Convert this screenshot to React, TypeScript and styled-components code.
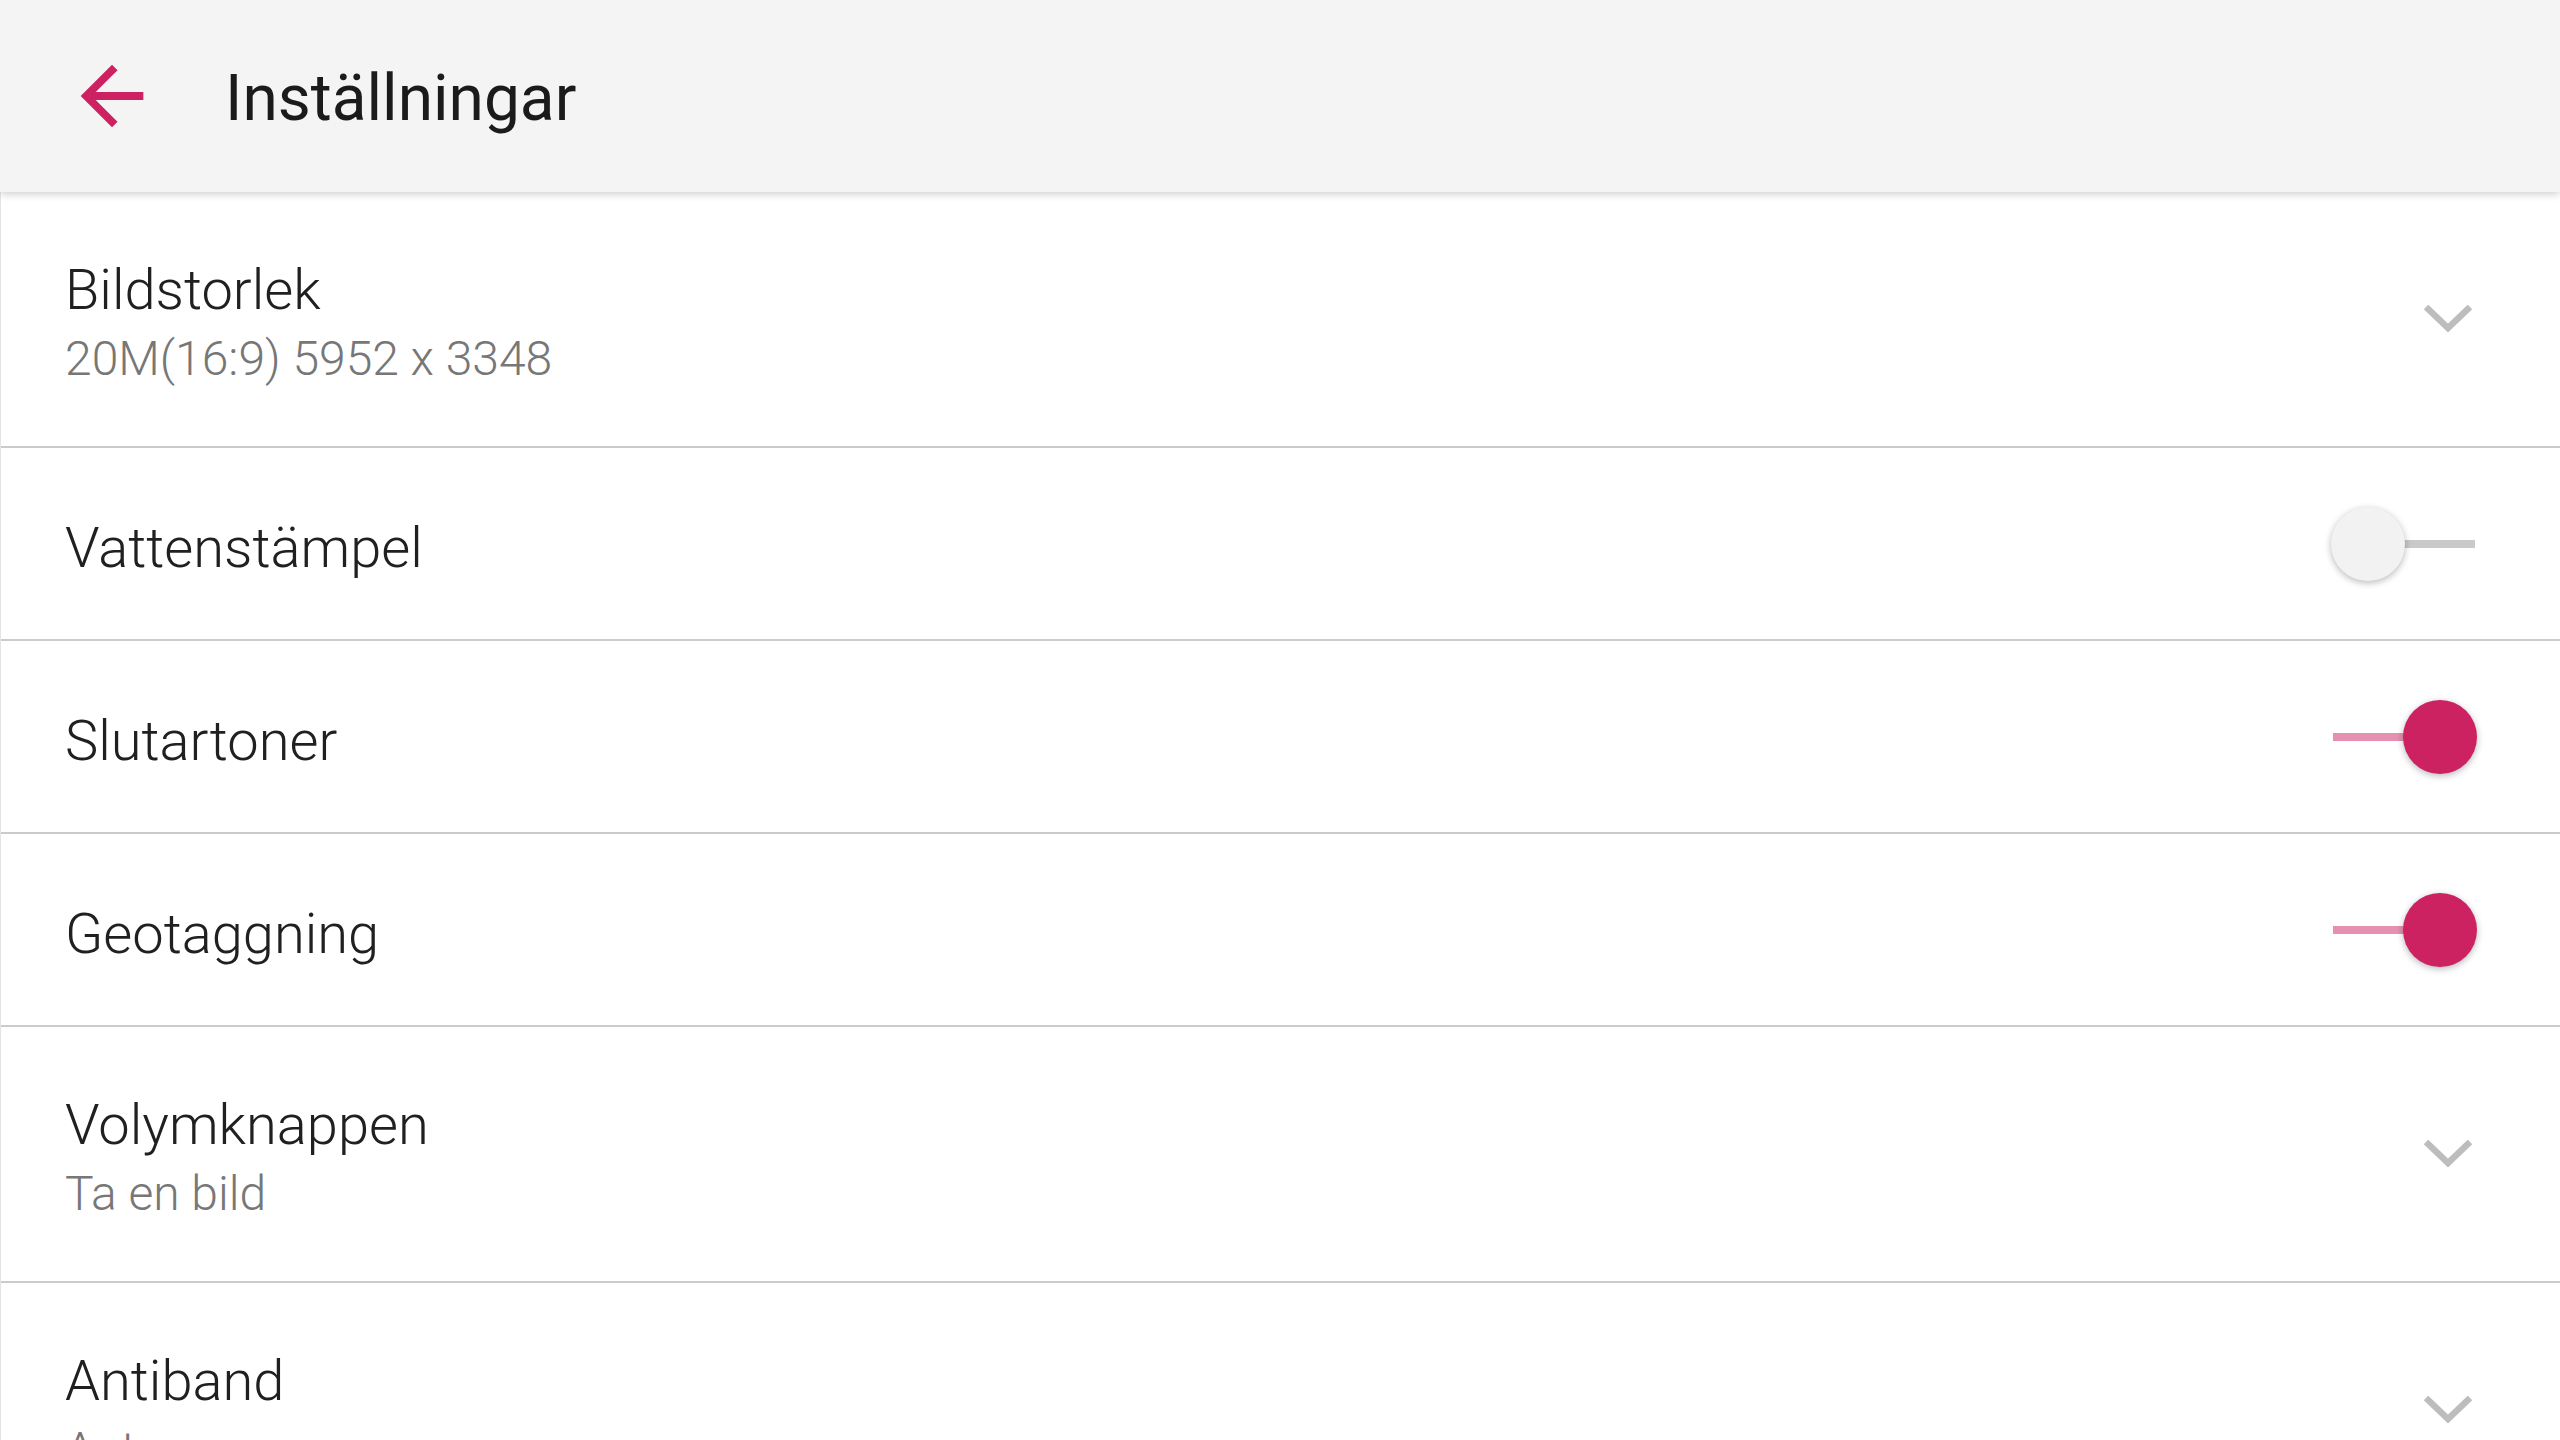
import React from "react";
import styled, { createGlobalStyle } from "styled-components";

const GlobalStyle = createGlobalStyle`
  html, body {
    margin: 0;
    padding: 0;
    background: #ffffff;
    font-family: Roboto, "Noto Sans", "Liberation Sans", sans-serif;
    -webkit-font-smoothing: antialiased;
  }
  * { box-sizing: border-box; }
`;

const Page = styled.div`
  width: 100%;
  min-height: 100vh;
  background: #ffffff;
  display: flex;
  flex-direction: column;
`;

const Header = styled.header`
  position: relative;
  z-index: 1;
  height: 192px;
  background: #f4f4f4;
  box-shadow: 0 2px 8px rgba(0, 0, 0, 0.2);
  display: flex;
  align-items: center;
  padding-left: 65px;
`;

const BackButton = styled.button`
  width: 94px;
  height: 94px;
  padding: 0;
  border: none;
  background: transparent;
  display: flex;
  align-items: center;
  justify-content: center;
  color: #cc2261;
  cursor: pointer;
`;

const Title = styled.h1`
  margin: 0 0 0 66px;
  padding-top: 6px;
  font-family: Roboto, "Noto Sans", sans-serif;
  font-weight: 400;
  font-size: 64px;
  line-height: 80px;
  color: #1b1b1b;
`;

const List = styled.main`
  display: flex;
  flex-direction: column;
  border-left: 1px solid #e4e4e4;
`;

const Row = styled.div<{ $tall?: boolean }>`
  height: ${(p) => (p.$tall ? 256 : 193)}px;
  display: flex;
  align-items: center;
  justify-content: space-between;
  padding-left: 64px;
  border-bottom: 2px solid #cbcbcb;
  background: #ffffff;
`;

const TextBlock = styled.div<{ $shift: number }>`
  display: flex;
  flex-direction: column;
  padding-top: ${(p) => p.$shift}px;
`;

const Label = styled.div`
  font-family: Roboto, "Noto Sans", sans-serif;
  font-weight: 300;
  font-size: 56px;
  line-height: 66px;
  color: #202020;
`;

const Sub = styled.div`
  margin-top: 8px;
  font-family: Roboto, "Noto Sans", sans-serif;
  font-weight: 300;
  font-size: 48px;
  line-height: 56px;
  color: #777777;
`;

const Chevron = styled.div`
  width: 96px;
  height: 96px;
  margin-right: 64px;
  display: flex;
  align-items: center;
  justify-content: center;
  color: #bdbdbd;
`;

const Switch = styled.div<{ $on: boolean }>`
  position: relative;
  width: 146px;
  height: 74px;
  margin-right: 83px;
  display: flex;
  align-items: center;
  justify-content: ${(p) => (p.$on ? "flex-end" : "flex-start")};

  &::before {
    content: "";
    position: absolute;
    left: 2px;
    right: 2px;
    top: 33px;
    height: 8px;
    background: ${(p) => (p.$on ? "#e590b0" : "#c9c9c9")};
  }
`;

const Knob = styled.div<{ $on: boolean }>`
  position: relative;
  width: 74px;
  height: 74px;
  border-radius: 50%;
  background: ${(p) => (p.$on ? "#cc2262" : "#f2f2f2")};
  box-shadow: 0 2px 7px rgba(0, 0, 0, 0.28);
`;

const ArrowBack = () => (
  <svg width="94" height="94" viewBox="0 0 24 24" fill="currentColor">
    <path d="M20 11H7.83l5.59-5.59L12 4l-8 8 8 8 1.41-1.41L7.83 13H20v-2z" />
  </svg>
);

const ExpandMore = () => (
  <svg width="48" height="28" viewBox="0 0 48 28" fill="none">
    <polyline
      points="2,2 24,23 46,2"
      stroke="currentColor"
      strokeWidth="6.5"
      strokeLinecap="butt"
      strokeLinejoin="miter"
    />
  </svg>
);

type Item =
  | { kind: "select"; label: string; value: string }
  | { kind: "toggle"; label: string; on: boolean };

const items: Item[] = [
  { kind: "select", label: "Bildstorlek", value: "20M(16:9) 5952 x 3348" },
  { kind: "toggle", label: "Vattenstämpel", on: false },
  { kind: "toggle", label: "Slutartoner", on: true },
  { kind: "toggle", label: "Geotaggning", on: true },
  { kind: "select", label: "Volymknappen", value: "Ta en bild" },
  { kind: "select", label: "Antiband", value: "Auto" },
];

export default function App() {
  return (
    <>
      <GlobalStyle />
      <Page>
        <Header>
          <BackButton aria-label="Tillbaka">
            <ArrowBack />
          </BackButton>
          <Title>Inställningar</Title>
        </Header>
        <List>
          {items.map((it) =>
            it.kind === "select" ? (
              <Row key={it.label} $tall>
                <TextBlock $shift={6}>
                  <Label>{it.label}</Label>
                  <Sub>{it.value}</Sub>
                </TextBlock>
                <Chevron>
                  <ExpandMore />
                </Chevron>
              </Row>
            ) : (
              <Row key={it.label}>
                <TextBlock $shift={8}>
                  <Label>{it.label}</Label>
                </TextBlock>
                <Switch $on={it.on}>
                  <Knob $on={it.on} />
                </Switch>
              </Row>
            )
          )}
        </List>
      </Page>
    </>
  );
}
